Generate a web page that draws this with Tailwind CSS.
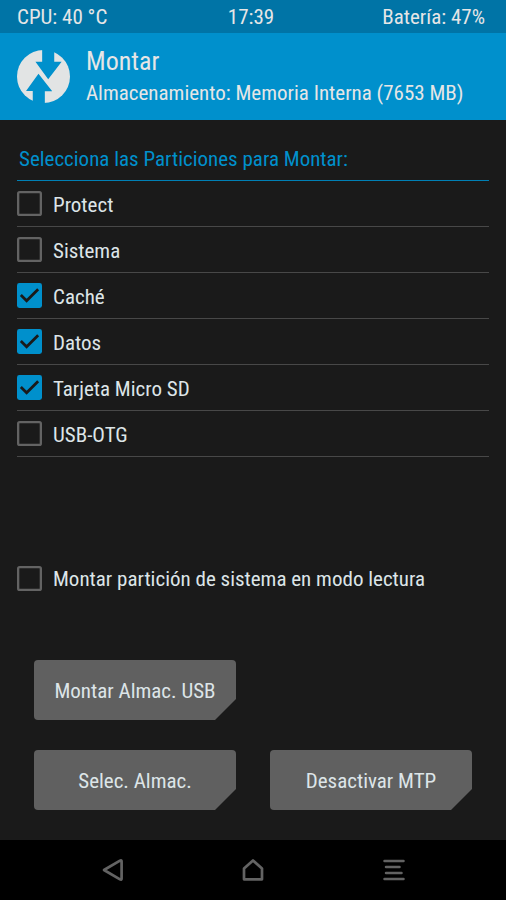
<!DOCTYPE html>
<html lang="es">
<head>
<meta charset="utf-8">
<meta name="viewport" content="width=device-width, initial-scale=1">
<title>Montar</title>
<script src="https://cdn.jsdelivr.net/npm/@tailwindcss/browser@4"></script>
</head>
<body class="flex min-h-screen flex-col bg-[#1a1a1a] font-['Roboto_Condensed','Roboto',sans-serif] text-[21px] leading-[30px] text-[#dde5e8]">
  <div class="grid h-[33px] grid-cols-3 items-center bg-[#0074a6] pl-[17px] pr-[21px] text-[#e6e6e6]">
    <span>CPU: 40 °C</span>
    <span class="text-center">17:39</span>
    <span class="text-right">Batería: 47%</span>
  </div>
  <header class="flex h-[87px] items-center gap-4 bg-[#0090cc] px-[17px] text-[#e6e6e6]">
    <svg class="size-[53px] shrink-0" viewBox="0 0 158 158" aria-hidden="true">
      <circle cx="79" cy="79" r="79" fill="#e2e4e4"/>
      <path fill="#0090cc" d="M75-5V35H55L93 87L133 35H111V-5ZM64 71L27 122H47V165H83V123H105Z"/>
    </svg>
    <div>
      <h1 class="text-[26px] leading-8">Montar</h1>
      <p class="leading-8 whitespace-nowrap">Almacenamiento: Memoria Interna (7653 MB)</p>
    </div>
  </header>
  <main class="flex flex-1 flex-col px-[17px]">
    <fieldset>
      <legend class="flex h-[61px] w-full items-center border-b border-[#0080b5] pt-[18px] pl-[2px] text-[#0090cc]">Selecciona las Particiones para Montar:</legend>
      <label class="flex h-[46px] items-center gap-[11px] border-b border-[#484848]">
        <input type="checkbox" class="peer sr-only">
        <svg class="size-[25px] shrink-0" viewBox="0 0 26 26" aria-hidden="true"><rect x="1.2" y="1.2" width="23.6" height="23.6" rx="1.5" fill="none" stroke="#636363" stroke-width="2.4"/></svg>
        <span class="pt-[2px]">Protect</span>
      </label>
      <label class="flex h-[46px] items-center gap-[11px] border-b border-[#484848]">
        <input type="checkbox" class="peer sr-only">
        <svg class="size-[25px] shrink-0" viewBox="0 0 26 26" aria-hidden="true"><rect x="1.2" y="1.2" width="23.6" height="23.6" rx="1.5" fill="none" stroke="#636363" stroke-width="2.4"/></svg>
        <span class="pt-[2px]">Sistema</span>
      </label>
      <label class="flex h-[46px] items-center gap-[11px] border-b border-[#484848]">
        <input type="checkbox" checked class="peer sr-only">
        <svg class="size-[25px] shrink-0" viewBox="0 0 26 26" aria-hidden="true"><rect width="26" height="26" rx="2.5" fill="#0090cc"/><path d="M4 12.5L10 18.5L22 6.5" fill="none" stroke="#1a1a1a" stroke-width="2.9"/></svg>
        <span class="pt-[2px]">Caché</span>
      </label>
      <label class="flex h-[46px] items-center gap-[11px] border-b border-[#484848]">
        <input type="checkbox" checked class="peer sr-only">
        <svg class="size-[25px] shrink-0" viewBox="0 0 26 26" aria-hidden="true"><rect width="26" height="26" rx="2.5" fill="#0090cc"/><path d="M4 12.5L10 18.5L22 6.5" fill="none" stroke="#1a1a1a" stroke-width="2.9"/></svg>
        <span class="pt-[2px]">Datos</span>
      </label>
      <label class="flex h-[46px] items-center gap-[11px] border-b border-[#484848]">
        <input type="checkbox" checked class="peer sr-only">
        <svg class="size-[25px] shrink-0" viewBox="0 0 26 26" aria-hidden="true"><rect width="26" height="26" rx="2.5" fill="#0090cc"/><path d="M4 12.5L10 18.5L22 6.5" fill="none" stroke="#1a1a1a" stroke-width="2.9"/></svg>
        <span class="pt-[2px]">Tarjeta Micro SD</span>
      </label>
      <label class="flex h-[46px] items-center gap-[11px] border-b border-[#484848]">
        <input type="checkbox" class="peer sr-only">
        <svg class="size-[25px] shrink-0" viewBox="0 0 26 26" aria-hidden="true"><rect x="1.2" y="1.2" width="23.6" height="23.6" rx="1.5" fill="none" stroke="#636363" stroke-width="2.4"/></svg>
        <span class="pt-[2px]">USB-OTG</span>
      </label>
    </fieldset>
    <label class="mt-auto flex h-[46px] items-center gap-[11px]">
      <input type="checkbox" class="peer sr-only">
      <svg class="size-[25px] shrink-0" viewBox="0 0 26 26" aria-hidden="true"><rect x="1.2" y="1.2" width="23.6" height="23.6" rx="1.5" fill="none" stroke="#636363" stroke-width="2.4"/></svg>
      <span class="pt-[2px]">Montar partición de sistema en modo lectura</span>
    </label>
    <div class="mt-[59px] mb-[30px] grid grid-cols-2 gap-x-[34px] gap-y-[30px] px-[17px]">
      <button type="button" class="h-[60px] rounded bg-[#606060] pt-[2px] [clip-path:polygon(0_0,100%_0,100%_calc(100%-21px),calc(100%-21px)_100%,0_100%)]">Montar Almac. USB</button>
      <button type="button" class="col-start-1 h-[60px] rounded bg-[#606060] pt-[2px] [clip-path:polygon(0_0,100%_0,100%_calc(100%-21px),calc(100%-21px)_100%,0_100%)]">Selec. Almac.</button>
      <button type="button" class="h-[60px] rounded bg-[#606060] pt-[2px] [clip-path:polygon(0_0,100%_0,100%_calc(100%-21px),calc(100%-21px)_100%,0_100%)]">Desactivar MTP</button>
    </div>
  </main>
  <nav class="flex h-[60px] items-center justify-center gap-[117px] bg-black" aria-label="Navegación">
    <button type="button" aria-label="Atrás">
      <svg class="size-6" viewBox="0 0 24 24" fill="none" stroke="#636363" stroke-width="2.7" stroke-linejoin="round"><path d="M4 12L20 2.6Q21.6 1.8 21.6 3.5V20.5Q21.6 22.2 20 21.4Z"/></svg>
    </button>
    <button type="button" aria-label="Inicio">
      <svg class="size-6" viewBox="0 0 24 24" fill="none" stroke="#636363" stroke-width="2.7" stroke-linejoin="round"><path d="M12 2.5L21 10.5V21.3H3V10.5Z"/></svg>
    </button>
    <button type="button" aria-label="Registro">
      <svg class="size-6" viewBox="0 0 24 24" fill="none" stroke="#636363" stroke-width="2.5" stroke-linecap="round"><path d="M2.5 3H21.5M4 9H17.5M4 15H19.5M2.5 21H21.5"/></svg>
    </button>
  </nav>
</body>
</html>
